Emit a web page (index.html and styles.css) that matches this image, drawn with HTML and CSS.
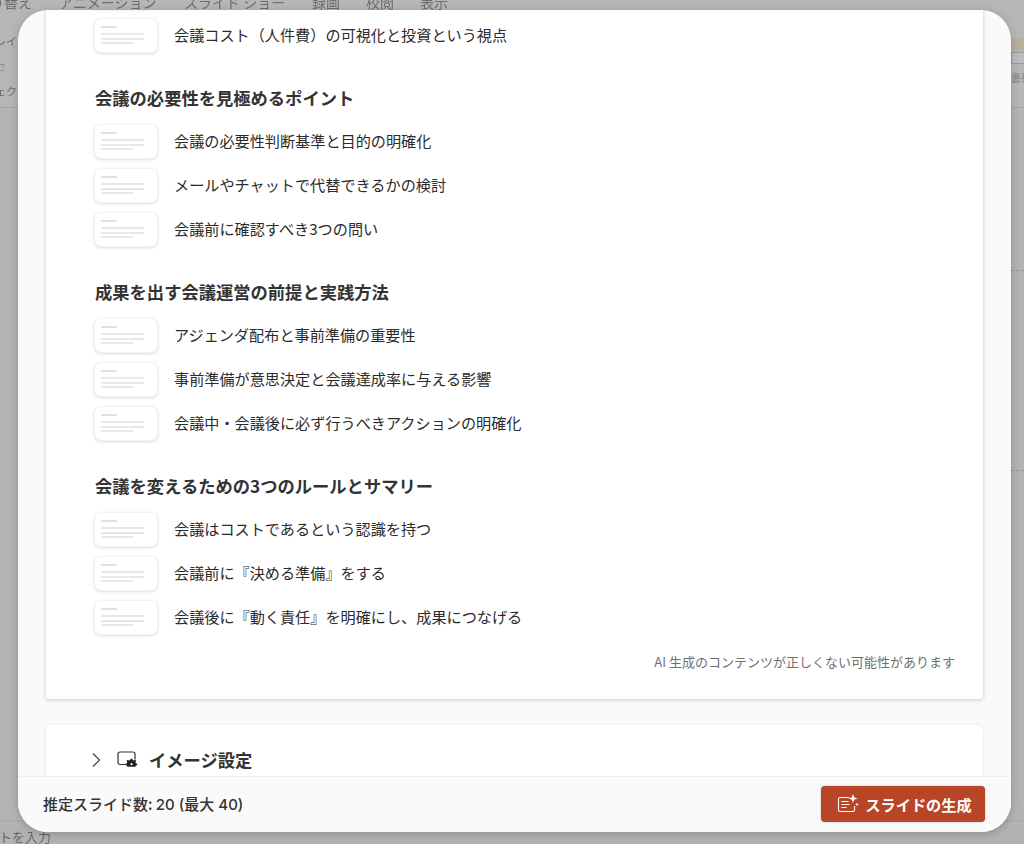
FILE: index.html
```html
<!DOCTYPE html>
<html lang="ja">
<head>
<meta charset="utf-8">
<title>スライドの生成</title>
<link rel="stylesheet" href="styles.css">
</head>
<body>
<div class="backdrop">
  <nav class="ribbon-tabs">
    <span class="tab tab-a">り替え</span>
    <span class="tab tab-b">アニメーション</span>
    <span class="tab tab-c">スライド ショー</span>
    <span class="tab tab-d">録画</span>
    <span class="tab tab-e">校閲</span>
    <span class="tab tab-f">表示</span>
  </nav>
  <div class="ribbon">
    <div class="ribbon-left"><span>レイ</span><span class="faint">セ</span><span>ェク</span></div>
    <div class="ribbon-right"><span class="swatch"></span><span class="box"></span><span class="faint-text">書列</span></div>
  </div>
  <div class="workspace">
    <span class="dash"></span>
    <span class="dash dash-low"></span>
  </div>
  <div class="prompt">トを入力</div>
</div>

<main class="modal">
  <div class="scroll">
    <section class="card outline-card">
      <div class="group">
        <div class="row"><div class="thumb"><i class="l1"></i><i class="l2"></i><i class="l2"></i><i class="l3"></i></div></div>
        <div class="row"><div class="thumb"><i class="l1"></i><i class="l2"></i><i class="l2"></i><i class="l3"></i></div><span>会議コスト（人件費）の可視化と投資という視点</span></div>
      </div>
      <div class="group">
        <h2>会議の必要性を見極めるポイント</h2>
        <div class="row"><div class="thumb"><i class="l1"></i><i class="l2"></i><i class="l2"></i><i class="l3"></i></div><span>会議の必要性判断基準と目的の明確化</span></div>
        <div class="row"><div class="thumb"><i class="l1"></i><i class="l2"></i><i class="l2"></i><i class="l3"></i></div><span>メールやチャットで代替できるかの検討</span></div>
        <div class="row"><div class="thumb"><i class="l1"></i><i class="l2"></i><i class="l2"></i><i class="l3"></i></div><span>会議前に確認すべき3つの問い</span></div>
      </div>
      <div class="group">
        <h2>成果を出す会議運営の前提と実践方法</h2>
        <div class="row"><div class="thumb"><i class="l1"></i><i class="l2"></i><i class="l2"></i><i class="l3"></i></div><span>アジェンダ配布と事前準備の重要性</span></div>
        <div class="row"><div class="thumb"><i class="l1"></i><i class="l2"></i><i class="l2"></i><i class="l3"></i></div><span>事前準備が意思決定と会議達成率に与える影響</span></div>
        <div class="row"><div class="thumb"><i class="l1"></i><i class="l2"></i><i class="l2"></i><i class="l3"></i></div><span>会議中・会議後に必ず行うべきアクションの明確化</span></div>
      </div>
      <div class="group">
        <h2>会議を変えるための3つのルールとサマリー</h2>
        <div class="row"><div class="thumb"><i class="l1"></i><i class="l2"></i><i class="l2"></i><i class="l3"></i></div><span>会議はコストであるという認識を持つ</span></div>
        <div class="row"><div class="thumb"><i class="l1"></i><i class="l2"></i><i class="l2"></i><i class="l3"></i></div><span>会議前に『決める準備』をする</span></div>
        <div class="row"><div class="thumb"><i class="l1"></i><i class="l2"></i><i class="l2"></i><i class="l3"></i></div><span>会議後に『動く責任』を明確にし、成果につなげる</span></div>
      </div>
      <p class="note">AI 生成のコンテンツが正しくない可能性があります</p>
    </section>
    <section class="card settings-card">
      <svg class="chevron" width="9" height="16" viewBox="0 0 9 16" aria-hidden="true"><path d="M1 1.500 7.500 8 1 14.500" fill="none" stroke="#444" stroke-width="1.200"/></svg>
      <svg class="image-icon" width="21" height="19" viewBox="0 0 21 19" aria-hidden="true">
        <path d="M8.500 13.500H3a2 2 0 0 1-2-2V3a2 2 0 0 1 2-2h13a2 2 0 0 1 2 2v5.500" fill="none" stroke="#333" stroke-width="1.200"/>
        <path d="M14.700 8.800h1.600l.4 1.500 1.300.5 1.300-.8 1.100 1.100-.8 1.300.5 1.300 1.400.4v1.600l-1.400.4-.5 1.300-3 .1-2.600 0-3-.1-.5-1.300-1.400-.4v-1.600l1.400-.4.5-1.300-.8-1.300 1.100-1.100 1.300.8 1.300-.5z" fill="#222" transform="translate(0 -.6) scale(.94)"/>
        <circle cx="14.500" cy="13.200" r="1.100" fill="#fafafa"/>
      </svg>
      <h3>イメージ設定</h3>
    </section>
  </div>
  <footer class="footer">
    <span class="estimate">推定スライド数: <b>20 (最大 40)</b></span>
    <button class="generate" type="button">
      <svg width="22" height="20" viewBox="0 0 22 20" aria-hidden="true">
        <path d="M12 3.500H3A1.500 1.500 0 0 0 1.500 5v11A1.500 1.500 0 0 0 3 17.500h13a1.500 1.500 0 0 0 1.500-1.500v-4" fill="none" stroke="#fff" stroke-width="1.100"/>
        <path d="M4.500 7.500h7M4.500 10.500h8M4.500 13.500h5" stroke="#fff" stroke-width="1.100"/>
        <path d="M16 0l1.200 3.300 3.300 1.200-3.300 1.200L16 9l-1.200-3.300-3.300-1.200 3.300-1.200zM20 8.500l.5 1.500 1.500.5-1.500.5-.5 1.500-.5-1.500-1.500-.5 1.500-.5z" fill="#fff"/>
      </svg>
      <span>スライドの生成</span>
    </button>
  </footer>
</main>
</body>
</html>
```
FILE: styles.css
```css
* { box-sizing: border-box; }
html, body { margin: 0; height: 100%; }
body {
  position: relative;
  width: 1024px;
  height: 844px;
  overflow: hidden;
  background: #b0b0b0;
  font-family: "Noto Sans CJK JP", "Noto Sans", sans-serif;
  color: #2e2e2e;
}
.backdrop {
  height: 844px;
  display: flex;
  flex-direction: column;
  background: #b2b2b2;
  color: #6a6a6a;
  filter: blur(0.5px);
}
.ribbon-tabs {
  height: 10px;
  background: #b6b6b6;
  font-size: 14px;
  line-height: 14px;
  color: #6e6e6e;
  display: flex;
}
.tab { display: block; margin-top: -5px; white-space: nowrap; }
.tab-a { margin-left: -10px; width: 69px; }
.tab-b { width: 125px; }
.tab-c { width: 128px; }
.tab-d { width: 54px; }
.tab-e { width: 54px; }
.ribbon {
  height: 98px;
  display: flex;
  justify-content: space-between;
  background: #b6b6b6;
  border-bottom: 1px solid #a6a6a6;
}
.ribbon-left {
  display: flex;
  flex-direction: column;
  gap: 11px;
  padding-top: 24px;
  margin-left: -5px;
  font-size: 11px;
  line-height: 14px;
}
.faint { color: #8c8c8c; }
.ribbon-right {
  width: 13px;
  padding-top: 28px;
  display: flex;
  flex-direction: column;
  gap: 2px;
  font-size: 10px;
  line-height: 12px;
  overflow: hidden;
}
.swatch { height: 12px; background: #b8b09a; flex: none; }
.box { height: 12px; width: 16px; border: 1px solid #999; background: #bdbdbd; flex: none; }
.faint-text { margin-top: 6px; white-space: nowrap; color: #808080; }
.workspace {
  flex: 1;
  display: flex;
  flex-direction: column;
  align-items: flex-end;
  padding-top: 162px;
  background: #b3b3b3;
}
.dash { width: 13px; height: 1px; border-top: 1px dashed #959595; }
.dash-low { margin-top: 199px; }
.prompt {
  height: 24px;
  padding-top: 8px;
  margin-left: -1px;
  font-size: 13px;
  line-height: 16px;
  background: #b2b2b2;
  border-top: 1px solid #a8a8a8;
  color: #666;
}
.modal {
  position: absolute;
  left: 18px;
  top: 10px;
  width: 993px;
  height: 822px;
  display: flex;
  flex-direction: column;
  background: #fafafa;
  border-radius: 30px;
  overflow: hidden;
  box-shadow: 0 2px 8px rgba(0, 0, 0, .2);
}
.scroll {
  flex: 1;
  min-height: 0;
  overflow: hidden;
  display: flex;
  flex-direction: column;
  gap: 26px;
  padding: 0 28px;
}
.card {
  flex: none;
  width: 937px;
  background: #fff;
  border-radius: 4px;
}
.outline-card {
  height: 733px;
  margin-top: -44px;
  padding: 8px 28px 0 49px;
  display: flex;
  flex-direction: column;
  gap: 33px;
  box-shadow: 0 1px 4px rgba(0, 0, 0, .2);
}
.group { display: flex; flex-direction: column; gap: 9px; }
.group h2 {
  margin: 0 0 5px;
  font-size: 17.3px;
  line-height: 24px;
  font-weight: 700;
  color: #333;
}
.row {
  display: flex;
  align-items: center;
  gap: 16px;
  height: 35px;
  font-size: 15.15px;
  line-height: 20px;
  color: #2b2b2b;
}
.row span { margin-top: -3px; }
.thumb {
  width: 64px;
  height: 35px;
  margin-left: -1px;
  padding: 7px 6px;
  border-radius: 7px;
  background: #fff;
  border: 1px solid #f3f3f3;
  box-shadow: 0 1px 3px rgba(0, 0, 0, .14);
  display: flex;
  flex-direction: column;
  gap: 3px;
  flex: none;
}
.thumb i { display: block; height: 2px; background: #e8e8e8; }
.thumb .l1 { width: 16px; background: #e0e0e0; margin-bottom: 2px; }
.thumb .l2 { width: 43px; }
.thumb .l3 { width: 32px; margin-top: -1px; }
.note {
  margin: -15px 0 0;
  text-align: right;
  font-size: 13px;
  line-height: 18px;
  color: #707070;
}
.settings-card {
  height: 60px;
  display: flex;
  align-items: center;
  gap: 16px;
  padding: 9px 0 0 46px;
  box-shadow: 0 0 3px rgba(0, 0, 0, .1);
}
.image-icon { margin: 2px -5px 0 0; }
.settings-card h3 {
  margin: 0;
  font-size: 17.3px;
  line-height: 24px;
  font-weight: 700;
  color: #333;
}
.footer {
  flex: none;
  height: 56px;
  display: flex;
  align-items: center;
  justify-content: space-between;
  padding: 0 26px 2px 25px;
  background: #fafafa;
  border-top: 1px solid #eeeeee;
}
.estimate {
  font-size: 15px;
  font-weight: 500;
  color: #333;
}
.estimate b { font-family: "Inter", "Noto Sans CJK JP", sans-serif; font-weight: 500; }
.generate {
  width: 164px;
  height: 36px;
  display: flex;
  align-items: center;
  justify-content: center;
  gap: 6px;
  padding: 0 0 0 3px;
  border: 0;
  border-radius: 4px;
  background: #b94527;
  color: #fff;
  font-family: inherit;
  font-size: 15.2px;
  font-weight: 700;
  box-shadow: 0 0 2px rgba(0, 0, 0, .3);
}
```
